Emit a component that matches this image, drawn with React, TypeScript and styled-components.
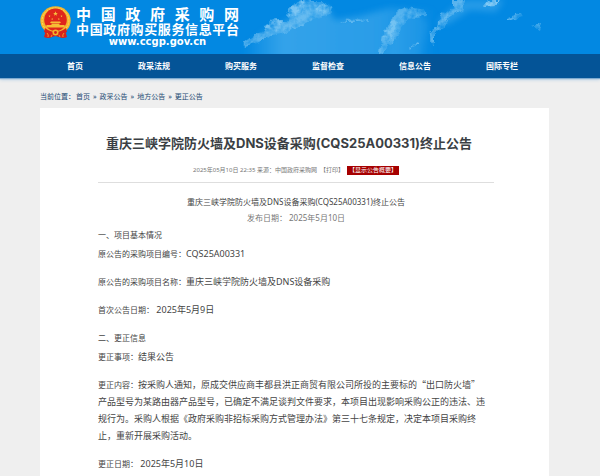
import React from "react";
import styled, { createGlobalStyle } from "styled-components";

const Global = createGlobalStyle`
  * { box-sizing: border-box; }
  body { margin: 0; background: #efefef; color: #444; font-family: "Noto Sans", "Noto Sans CJK SC", sans-serif; font-size: 8px; }
  p, h1, h2 { margin: 0; }
  a { color: inherit; text-decoration: none; }
`;

const Page = styled.div`
  display: flex;
  flex-direction: column;
  min-height: 100vh;
`;
const Header = styled.header`
  position: relative;
  height: 54px;
  padding: 6px 40px 0;
  background: #0288e2;
  overflow: hidden;
`;
const Sky = styled.svg`
  position: absolute;
  top: 0;
  left: 240px;
  width: 310px;
  height: 54px;
`;
const Brand = styled.a`
  position: relative;
  display: flex;
  gap: 5px;
  color: #fff;
`;
const Emblem = styled.svg`
  width: 31px;
  height: 33px;
  flex: none;
`;
const BrandText = styled.span`
  display: flex;
  flex-direction: column;
  width: 163px;
  font-family: "Noto Sans CJK SC", sans-serif;
  font-weight: 700;
`;
const BrandLine = styled.span<{ $size: number }>`
  font-size: ${(p) => p.$size}px;
  line-height: 15px;
  text-align-last: justify;
  white-space: nowrap;
`;
const Url = styled.span`
  font: 700 10px/12px "DejaVu Sans", sans-serif;
  text-align: center;
`;
const Nav = styled.nav`
  display: flex;
  gap: 55px;
  height: 24px;
  padding: 0 67px;
  align-items: center;
  background: #045497;
  color: #fff;
  font-weight: 700;
  line-height: 12px;
  box-shadow: 0 1px 1px #7fabd0, 0 2px 3px #bcd3e6;
  white-space: nowrap;
`;
const Crumbs = styled.nav`
  display: flex;
  padding: 14px 40px 6px;
  color: #1c4a73;
  font-size: 7px;
  line-height: 10px;
`;
const CrumbLabel = styled.span`
  margin-right: 1px;
`;
const Mark = styled.span`
  padding: 0 3px;
`;
const Article = styled.article`
  flex: 1;
  margin: 0 51px 0 40px;
  padding: 24px 63px 4px 58px;
  background: #fff;
`;
const Title = styled.h1`
  margin-left: -6px;
  font-family: Inter, "Noto Sans CJK SC", sans-serif;
  text-align: center;
  white-space: nowrap;
  font-size: 13px;
  line-height: 22px;
  color: #3b3f44;
`;
const Meta = styled.div`
  display: flex;
  justify-content: center;
  gap: 3px;
  margin: 12px -8px 11px 0;
  padding-bottom: 7px;
  border-bottom: 1px solid #dedede;
  font-size: 6px;
  line-height: 9px;
  color: #777;
`;
const Toggle = styled.button`
  border: 0;
  padding: 0 2px;
  background: #a60000;
  color: #fff;
  font: inherit;
`;
const Centered = styled.p<{ $soft?: boolean }>`
  margin-right: -8px;
  text-align: center;
  font-size: 8px;
  line-height: 16px;
  color: ${(p) => (p.$soft ? "#777" : "#444")};
`;
const Section = styled.h2`
  margin-bottom: 2px;
  font-size: 8px;
  font-weight: 400;
  line-height: 17px;
`;
const Field = styled.p<{ $last?: boolean }>`
  margin-bottom: ${(p) => (p.$last ? 0 : 11)}px;
  font-size: 9px;
  line-height: 17px;
`;
const Statement = styled(Field)`
  font-family: "Noto Sans CJK SC", sans-serif;
`;
const Label = styled.span`
  font-size: 8px;
`;

const Clouds = () => (
  <Sky viewBox="0 0 310 54" aria-hidden="true">
    <defs>
      <linearGradient id="haze" x1="0" y1="0" x2="1" y2="0">
        <stop offset="0" stopColor="#64bdf2" stopOpacity="0" />
        <stop offset="0.2" stopColor="#64bdf2" stopOpacity="0.5" />
        <stop offset="0.7" stopColor="#50b2ef" stopOpacity="0.5" />
        <stop offset="1" stopColor="#50b2ef" stopOpacity="0" />
      </linearGradient>
      <filter id="soft" x="-50%" y="-50%" width="200%" height="200%">
        <feGaussianBlur stdDeviation="3" />
      </filter>
      <filter id="puff" x="-20%" y="-20%" width="140%" height="140%">
        <feTurbulence type="fractalNoise" baseFrequency="0.14" numOctaves="4" seed="8" result="n" />
        <feDisplacementMap in="SourceGraphic" in2="n" scale="8" xChannelSelector="R" yChannelSelector="G" result="d" />
        <feColorMatrix in="n" type="matrix" values="0 0 0 0 1  0 0 0 0 1  0 0 0 0 1  2 0 0 0 -0.3" result="m" />
        <feComposite in="d" in2="m" operator="in" result="c" />
        <feGaussianBlur in="c" stdDeviation="0.7" />
      </filter>
    </defs>
    <path d="M4 46 L26 30 L50 20 L58 6 L86 6 L95 20 L120 16 L150 8 L195 10 L190 30 L196 60 L4 60Z" fill="url(#haze)" filter="url(#soft)" />
    <path d="M148 60 L152 28 L162 12 L178 12 L188 24 L180 60Z" fill="#5bb8f1" opacity="0.2" filter="url(#soft)" />
    <path d="M196 24 L212 8 L224 0 L264 0 L256 12 L230 10 L208 24Z" fill="#5bb8f1" opacity="0.4" filter="url(#soft)" />
    <g filter="url(#puff)" fill="#9bd6f8">
      <path d="M4 42 L14 35 L24 32 L25 24 L36 20 L48 20 L49 11 L53 3 L60 0 L82 0 L92 7 L90 16 L74 19 L64 25 L50 30 L32 35 L22 41 L6 46Z" opacity="0.5" />
      <path d="M50 17 L52 4 L60 1 L66 3 L61 16Z" opacity="0.5" />
      <path d="M74 10 L84 2 L93 8 L86 14Z" opacity="0.4" />
      <path d="M25 31 L28 23 L44 20 L40 29Z" opacity="0.5" />
      <path d="M140 53 L143 34 L150 22 L156 12 L167 7 L186 10 L188 16 L170 17 L160 28 L155 40 L146 45 L144 54Z" opacity="0.45" />
      <path d="M144 36 L152 20 L158 22 L153 38Z" opacity="0.4" />
      <path d="M190 43 L190 32 L198 28 L200 15 L214 7 L214 0 L224 0 L222 10 L209 17 L203 29 L195 34 L195 44Z" opacity="0.55" />
      <path d="M243 6 L248 0 L262 0 L256 5Z" opacity="0.8" />
      <path d="M170 48 L178 42 L180 45 L172 49Z" opacity="0.7" />
      <path d="M268 17 L280 13 L282 17 L270 19Z" opacity="0.6" />
      <path d="M290 24 L302 24 L300 30Z" opacity="0.4" />
      <path d="M100 20 L128 19 L128 22 L104 22Z" opacity="0.5" />
    </g>
  </Sky>
);

const star = (cx: number, cy: number, r: number) =>
  Array.from({ length: 10 }, (_, i) => {
    const a = -Math.PI / 2 + (i * Math.PI) / 5;
    const d = i % 2 ? r * 0.42 : r;
    return `${cx + d * Math.cos(a)},${cy + d * Math.sin(a)}`;
  }).join(" ");

const NationalEmblem = () => (
  <Emblem viewBox="0 0 31 33" aria-hidden="true">
    <path d="M6 24 L4 31 Q8 33 12 31 L15.500 30 L19 31 Q23 33 27 31 L25 24Z" fill="#d8231b" />
    <ellipse cx="15.500" cy="14.500" rx="15.200" ry="14.300" fill="#f5b52b" />
    <ellipse cx="15.500" cy="14.500" rx="13.400" ry="12.600" fill="none" stroke="#fbd860" strokeWidth="1" strokeDasharray="2 1" />
    <circle cx="15.500" cy="13.800" r="11.300" fill="#df261c" />
    <polygon points={star(15.5, 7.8, 2.5)} fill="#f8c040" />
    <polygon points={star(9.5, 10.2, 1.1)} fill="#f8c040" />
    <polygon points={star(21.5, 10.2, 1.1)} fill="#f8c040" />
    <polygon points={star(12.2, 13, 1.1)} fill="#f8c040" />
    <polygon points={star(18.8, 13, 1.1)} fill="#f8c040" />
    <path d="M11 15.500 L20 15.500 L21 17 L10 17Z M11.500 17.500 H19.500 V19 H11.500Z M6.500 19 H24.500 L25 21.500 H6Z" fill="#f6bd35" />
    <path d="M5 22 Q10 26 15.500 26 Q21 26 26 22 L27 26 Q21 30 15.500 28 Q10 30 4 26Z" fill="#d8231b" />
    <circle cx="15.500" cy="26.500" r="3" fill="#f5b52b" />
    <circle cx="15.500" cy="26.500" r="1.400" fill="#d8231b" />
    <path d="M7 27 Q9 29 8 31 M24 27 Q22 29 23 31 M12 29 L11 31 M19 29 L20 31" stroke="#f5b52b" strokeWidth="0.800" fill="none" />
  </Emblem>
);

const navItems = ["首页", "政采法规", "购买服务", "监督检查", "信息公告", "国际专栏"];

export default function App() {
  return (
    <Page lang="zh-CN">
      <Global />
      <Header>
        <Clouds />
        <Brand href="#">
          <NationalEmblem />
          <BrandText>
            <BrandLine $size={15}>中 国 政 府 采 购 网</BrandLine>
            <BrandLine $size={13}>中国政府购买服务信息平台</BrandLine>
            <Url>www.ccgp.gov.cn</Url>
          </BrandText>
        </Brand>
      </Header>
      <Nav>
        {navItems.map((t) => (
          <a key={t} href="#">{t}</a>
        ))}
      </Nav>
      <Crumbs>
        <CrumbLabel>当前位置：</CrumbLabel>
        <a href="#">首页</a>
        <Mark>»</Mark>
        <a href="#">政采公告</a>
        <Mark>»</Mark>
        <a href="#">地方公告</a>
        <Mark>»</Mark>
        <a href="#">更正公告</a>
      </Crumbs>
      <Article>
        <Title>重庆三峡学院防火墙及DNS设备采购(CQS25A00331)终止公告</Title>
        <Meta>
          <span>2025年05月10日 22:35 来源：中国政府采购网</span>
          <a href="#">【打印】</a>
          <Toggle type="button">【显示公告概要】</Toggle>
        </Meta>
        <Centered>重庆三峡学院防火墙及DNS设备采购(CQS25A00331)终止公告</Centered>
        <Centered $soft>发布日期： 2025年5月10日</Centered>
        <Section>一、项目基本情况</Section>
        <Field><Label>原公告的采购项目编号：</Label>CQS25A00331</Field>
        <Field><Label>原公告的采购项目名称：</Label>重庆三峡学院防火墙及DNS设备采购</Field>
        <Field><Label>首次公告日期：</Label> 2025年5月9日</Field>
        <Section>二、更正信息</Section>
        <Field><Label>更正事项：</Label>结果公告</Field>
        <Statement>
          <Label>更正内容：</Label>按采购人通知，原成交供应商丰都县洪正商贸有限公司所投的主要标的“出口防火墙”<wbr />产品型号为某路由器产品型号，已确定不满足谈判文件要求，本项目出现影响采购公正的违法、违规行为。采购人根据《政府采购非招标采购方式管理办法》第三十七条规定，决定本项目采购终止，重新开展采购活动。
        </Statement>
        <Field $last><Label>更正日期：</Label> 2025年5月10日</Field>
      </Article>
    </Page>
  );
}
